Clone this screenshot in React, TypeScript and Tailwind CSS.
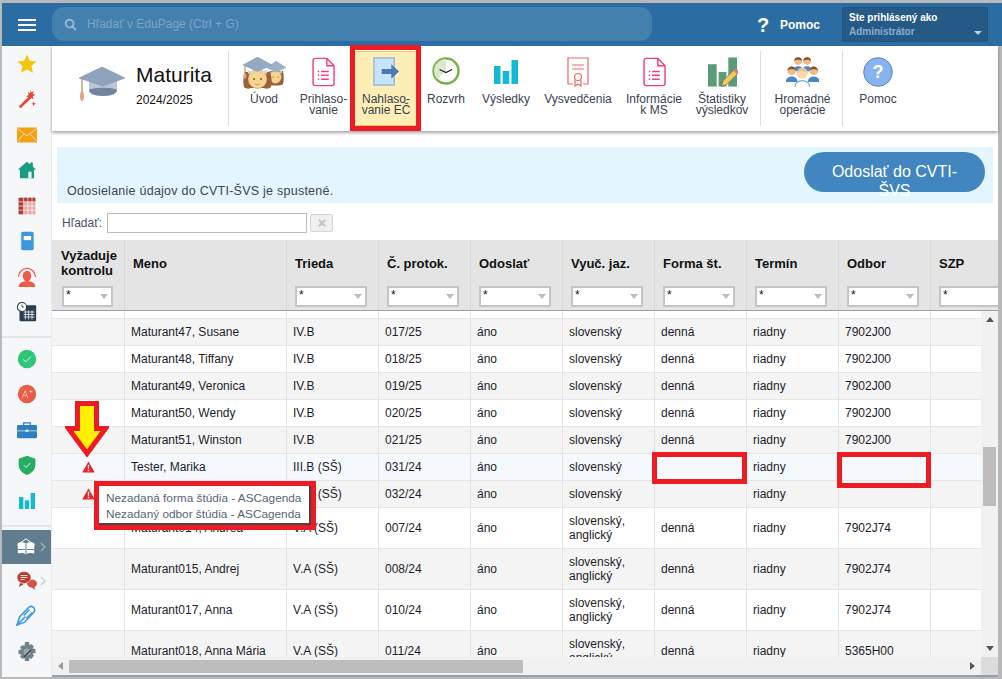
import React from "react";

const F = "font-['Liberation_Sans',Arial,sans-serif]";

/* ---------- toolbar icons ---------- */
const Cap = ({ className = "" }: { className?: string }) => (
  <svg viewBox="0 0 48 34" className={className}>
    <path d="M11 13v12c0 3 6 5 14 5s14-2 14-5V13z" fill="#b9c6d6" />
    <path d="M11 24c0 3 6 6 14 6s14-3 14-6c-3-3-25-3-28 0z" fill="#73859c" />
    <path d="M24 1 47 12 25 20 1 12z" fill="#8ea4bd" stroke="#7d93ad" strokeWidth=".6" />
    <path d="M4 12v14" stroke="#b28468" strokeWidth="1.2" />
    <path d="M2 30c0-3 1-5 2-5s2 2 2 5-1 5-2 5-2-2-2-5z" fill="#e0a283" />
  </svg>
);

const Doc = ({ c }: { c: string }) => (
  <svg viewBox="0 0 24 30" className="w-[23px] h-[30px]" fill="none" stroke={c} strokeWidth="1.5">
    <path d="M3.5.8h12l7.5 7.6v18.4a2.4 2.4 0 0 1-2.4 2.4H3.5a2.4 2.4 0 0 1-2.4-2.4V3.2A2.4 2.4 0 0 1 3.5.8z" />
    <path d="M15.5.8v7.6H23" />
    <path d="M9.5 14.5h8M9.5 18.5h8M9.5 22.5h8M6 14.5h1.5M6 18.5h1.5M6 22.5h1.5" strokeWidth="1.6" />
  </svg>
);

const Students = () => (
  <svg viewBox="0 0 44 32" className="w-[44px] h-[32px]">
    {/* small student behind */}
    <path d="M26 14c-1 5-1 10 0 13 2 2 14 2 15 0 1-3 1-8 0-13z" fill="#9c5f38" />
    <ellipse cx="33.500" cy="20" rx="6" ry="6.500" fill="#f7d58f" stroke="#a27452" strokeWidth=".4" />
    <path d="M26 13.500c4 2 10 2 14 0v3c-4-2-10-2-14 0z" fill="#c8d3df" />
    <path d="M34 4l10 6.500L34 15l-9-4z" fill="#9cb2c9" stroke="#8aa0b8" strokeWidth=".4" />
    {/* big student */}
    <path d="M3 15c-2 6-2 11-1 15 2 2 5 2 7 1h13c2 1 5 1 7-1 1-4 1-9-1-15z" fill="#9c5f38" />
    <ellipse cx="15.500" cy="22" rx="9.500" ry="9.500" fill="#f7d58f" stroke="#a27452" strokeWidth=".4" />
    <path d="M6 13c5 2.500 14 2.500 19 0v4c-5-2.500-14-2.500-19 0z" fill="#cdd7e2" />
    <path d="M15.500 0 30 8 15.500 14.500 1 8z" fill="#93aac3" stroke="#8197b2" strokeWidth=".5" />
    <path d="M3 9v7" stroke="#a67d63" />
    <path d="M1.500 19c0-2 .7-3 1.500-3s1.500 1 1.500 3-.7 3-1.500 3-1.500-1-1.500-3z" fill="#dd9f80" />
    <circle cx="12" cy="22" r=".9" fill="#6b4a2f" />
    <circle cx="19" cy="22" r=".9" fill="#6b4a2f" />
    <path d="M13 27c1.500 1 3.500 1 5 0" stroke="#b06a46" strokeWidth=".6" fill="none" />
    <circle cx="31" cy="20" r=".6" fill="#6b4a2f" />
    <circle cx="36" cy="20" r=".6" fill="#6b4a2f" />
  </svg>
);

const ExportIcon = () => (
  <svg viewBox="0 0 28 30" className="w-[27px] h-[29px] ml-[1px]">
    <rect x="1" y="1" width="21" height="28" fill="#c6e5fd" stroke="#9db5d4" strokeWidth="1.500" />
    <path d="M9 12.500h10V7.500l8 7.500-8 7.500v-5H9z" fill="#4a7bb5" />
  </svg>
);

const Clock = () => (
  <svg viewBox="0 0 28 28" className="w-[28px] h-[28px]">
    <circle cx="14" cy="14" r="12.500" fill="#fff" stroke="#7cb04b" strokeWidth="2.500" />
    <path d="M14 2a12 12 0 0 0-12 12 12 12 0 0 0 3 8l9-8z" fill="#dbe8cb" />
    <path d="M7.500 12.500 14 15.500l6-3" fill="none" stroke="#222" strokeWidth="1.300" />
  </svg>
);

const Bars = ({ c, className }: { c: string; className: string }) => (
  <svg viewBox="0 0 24 24" className={className} fill={c}>
    <rect x="0" y="6" width="6.500" height="18" />
    <rect x="8.700" y="11" width="6.500" height="13" />
    <rect x="17.500" y="0" width="6.500" height="24" />
  </svg>
);

const Diploma = () => (
  <svg viewBox="0 0 22 30" className="w-[22px] h-[30px]" fill="none" stroke="#ee6a5f" strokeWidth="1.200">
    <path d="M6 27H1V1h20v26h-5" />
    <path d="M5 8h12M5 12h12" />
    <circle cx="11" cy="20" r="3.500" />
    <path d="M8 23v6l3-2 3 2v-6" />
  </svg>
);

const StatsPencil = () => (
  <svg viewBox="0 0 32 30" className="w-[31px] h-[30px]">
    <rect x="1" y="7" width="9" height="23" fill="#5b9c78" />
    <rect x="12" y="15" width="8" height="15" fill="#5b9c78" />
    <rect x="22" y="0" width="9" height="30" fill="#5b9c78" />
    <path d="M15 30l1.500-6 11-11 4 4-11 11z" fill="#f3ca59" stroke="#554" strokeWidth=".6" />
    <path d="M27.500 13l2-2 3.500 3.500-2 2.500z" fill="#e0788a" />
  </svg>
);

const Person = ({ x, y, s = 1, big = false }: { x: number; y: number; s?: number; big?: boolean }) => (
  <g transform={`translate(${x} ${y}) scale(${s})`}>
    <path d="M0 17c0-3 3-5 6-5s6 2 6 5v1H0z" fill={big ? "#fff" : "#4a86c5"} stroke={big ? "#7fb0dc" : "none"} />
    <circle cx="6" cy="6" r="4.500" fill={big ? "#f8dcae" : "#f0b988"} />
    <path d="M1.500 6a4.500 4.500 0 0 1 9 0c-2-2-7-2-9 0z" fill={big ? "#eec68d" : "#8a5226"} />
  </g>
);

const People = () => (
  <svg viewBox="0 0 33 30" className="w-[33px] h-[30px]">
    <Person x={7} y={-1} s={0.85} />
    <Person x={16} y={-1} s={0.85} />
    <Person x={0} y={8} s={0.95} />
    <Person x={22} y={8} s={0.95} />
    <Person x={9} y={9} s={1.220} big />
  </svg>
);

const Help = () => (
  <svg viewBox="0 0 30 30" className="w-[30px] h-[30px]">
    <circle cx="15" cy="15" r="14.300" fill="#88b3ef" stroke="#5d83bd" strokeWidth="1" />
    <text x="15" y="21" textAnchor="middle" fill="#fff" fontSize="18" fontWeight="700" fontFamily="Liberation Sans">?</text>
  </svg>
);

/* ---------- sidebar icons ---------- */
const S = ({ children, box = "0 0 24 24" }: { children: React.ReactNode; box?: string }) => (
  <svg viewBox={box} className="w-[20px] h-[20px]">{children}</svg>
);

const sideTop: React.ReactNode[] = [
  <S><path d="M12 .5l3.400 7.500 8 .9-6 5.500 1.700 8L12 18.500l-7.100 3.900 1.700-8-6-5.500 8-.9z" fill="#f5c60e" /></S>,
  <S><path d="M2 21l12-12 2.500 2.500L4.500 23z" fill="#e5483b" /><path d="M16 1l1 3 3-1-1 3 3 1-3 2 1 3-3-1-2 2-1-3-3-1 3-2-1-3 3 1z" fill="#e5483b" /><path d="M20 15l.8 2 2 .8-2 .8-.8 2-.8-2-2-.8 2-.8z" fill="#e5483b" /></S>,
  <S box="0 0 24 18"><rect x="0" y="0" width="24" height="18" fill="#f59f16" /><path d="M0 1l12 9 12-9M0 17l8.500-9.500M24 17l-8.500-9.500" fill="none" stroke="#fde9c0" strokeWidth="1" /></S>,
  <S><path d="M12 2 1 11.500h2.500V22h17V11.500H23L19 8V3h-3v2.300z" fill="#1a9c80" /><rect x="13.500" y="14" width="4" height="8" fill="#e9f5f2" /></S>,
  <S><rect x="2" y="2" width="20" height="20" fill="#e7a8a3" /><path d="M2 2h20v5H2zM2 2h6v20H2z" fill="#b23a32" /><path d="M2 7h20M2 12h20M2 17h20M8 2v20M13 2v20M18 2v20" stroke="#fff" strokeWidth=".8" /></S>,
  <S box="0 0 18 24"><rect x="2" y="1" width="15" height="22" rx="2" fill="#3a97dc" /><rect x="5" y="6" width="9" height="5" fill="#fff" /><path d="M1 4h2M1 8h2M1 12h2M1 16h2M1 20h2" stroke="#a9d2ef" /></S>,
  <S><path d="M12 1a11 11 0 0 1 11 11h-1.500a9.500 9.500 0 0 0-19 0H1A11 11 0 0 1 12 1z" fill="#ea5b4a" /><ellipse cx="12" cy="11" rx="5" ry="6.500" fill="#ea5b4a" /><path d="M2 24c0-5 4-7 10-7s10 2 10 7z" fill="#ea5b4a" /></S>,
  <S><rect x="3" y="4" width="20" height="19" rx="1" fill="#2b3d4f" /><circle cx="6" cy="6" r="5.500" fill="#fff" stroke="#2b3d4f" strokeWidth="1.300" /><path d="M6 3v3h2.500" stroke="#2b3d4f" fill="none" /><path d="M8 12h13M8 15h13M8 18h13M10 10v11M14 10v11M18 10v11" stroke="#fff" strokeWidth=".9" /></S>,
];

const sideMid: React.ReactNode[] = [
  <S><circle cx="12" cy="12" r="11" fill="#2fc678" /><path d="M7.500 12.500l3 3 6-6.500" fill="none" stroke="#fff" strokeWidth="1" /></S>,
  <S><circle cx="12" cy="12" r="11" fill="#ea5b4a" /><path d="M6 17l4-9 3 9M7.500 14h4.500M14.500 9h4M16.500 7v4" fill="none" stroke="#f8c4bd" strokeWidth="1" /></S>,
  <S box="0 0 24 20"><path d="M8 4V1.500h8V4" fill="none" stroke="#2b80bd" strokeWidth="1.500" /><rect x="0" y="4" width="24" height="16" rx="1.500" fill="#2b80bd" /><path d="M0 11h24" stroke="#cfe5f4" /><rect x="10" y="9.500" width="4" height="3" rx="1.500" fill="#cfe5f4" /></S>,
  <S><path d="M12 1l10 3.500V12c0 6-5 10-10 12C7 22 2 18 2 12V4.500z" fill="#25ad63" /><path d="M8 12l3 3 5-5.500" fill="none" stroke="#fff" strokeWidth="1" /></S>,
  <Bars c="#14bad5" className="w-[16px] h-[16px]" />,
];

const Book = () => (
  <svg viewBox="0 0 24 22" className="w-[20px] h-[18px]" fill="none" stroke="#fff" strokeWidth="1.200">
    <path d="M1 9 12 1l11 8" />
    <path d="M12 7C9 5 5 5 2 6v13c3-1 7-1 10 1 3-2 7-2 10-1V6c-3-1-7-1-10 1z" fill="#fff" stroke="none" />
    <path d="M12 7v13" stroke="#617d8d" />
    <path d="M2 14h9M13 14h9" stroke="#617d8d" />
  </svg>
);

const Chat = () => (
  <svg viewBox="0 0 20 19" className="w-[20px] h-[19px]">
    <ellipse cx="15" cy="12.500" rx="5" ry="4" fill="#d4534a" />
    <path d="M13 15l5 4-1-5z" fill="#d4534a" />
    <ellipse cx="7" cy="6.500" rx="7" ry="6" fill="#c0392b" stroke="#f5f7f9" strokeWidth=".6" />
    <path d="M3 12l-1 4 5-3z" fill="#c0392b" />
    <path d="M3.500 4.500h7M3.500 6.500h7M3.500 8.500h4" stroke="#fff" strokeWidth=".9" />
  </svg>
);

const Pen = () => (
  <svg viewBox="0 0 22 22" className="w-[21px] h-[21px]" fill="none" stroke="#3d9be0" strokeWidth="1.700">
    <path d="M1 21l3-9L14 2c3-2 7 2 5 5L9 18z" />
    <path d="M1 21l9-9M8 11l6-6M11 14l6-6" />
  </svg>
);

const Gear = () => (
  <svg viewBox="0 0 20 20" className="w-[20px] h-[20px]">
    <path d="M8 0h4l.5 3 2-.8L17 4.500l-1.500 2 3 .5v4l-3 .5 1.500 2L14.500 17l-2-1-.5 3H8l-.5-3-2 1L3 14.500l1.500-2-3-.5V8l3-.5L3 5.500 5.500 3l2 .9z" fill="#72838c" />
    <circle cx="10" cy="10" r="3.500" fill="#9aa7ae" />
    <path d="M7 15l7-7" stroke="#3a4650" strokeWidth="1.500" />
  </svg>
);

const SideCell = ({ children, h = "h-[35.500px]" }: { children: React.ReactNode; h?: string }) => (
  <div className={`${h} flex items-center justify-center shrink-0`}>{children}</div>
);

/* ---------- toolbar ---------- */
type Tool = { w: string; icon: React.ReactNode; label: React.ReactNode };
const tools1: Tool[] = [
  { w: "w-[65px] pl-[5px]", icon: <Students />, label: "Úvod" },
  { w: "w-[61px] pr-[2px]", icon: <Doc c="#ef3f85" />, label: <>Prihlaso-<br />vanie</> },
];
const tools2: Tool[] = [
  { w: "w-[58px]", icon: <Clock />, label: "Rozvrh" },
  { w: "w-[62px]", icon: <Bars c="#14bad5" className="w-[24px] h-[24px] mt-[3px]" />, label: "Výsledky" },
  { w: "w-[82px]", icon: <Diploma />, label: "Vysvedčenia" },
  { w: "w-[70px]", icon: <Doc c="#ef3f85" />, label: <>Informácie<br />k MS</> },
  { w: "w-[66px]", icon: <StatsPencil />, label: <>Štatistiky<br />výsledkov</> },
];

const ToolItem = ({ t }: { t: Tool }) => (
  <div className={`${t.w} shrink-0 flex flex-col items-center`}>
    <div className="h-[31px] mt-[11px] flex items-start justify-center">{t.icon}</div>
    <div className="mt-[6px] text-[12px] leading-[11px] text-center text-[#3a3f52] whitespace-nowrap">{t.label}</div>
  </div>
);

const VSep = () => <div className="w-px h-[75px] bg-[#dcdcdc] shrink-0 mt-[5px]" />;

/* ---------- table ---------- */
const cols = [
  "w-[72px]", "w-[162px]", "w-[92px]", "w-[92px]", "w-[92px]", "w-[92px]", "w-[92px]", "w-[92px]", "w-[92px]", "w-[70px]",
];
const heads: { t: React.ReactNode; w?: string; filter: boolean }[] = [
  { t: <>Vyžaduje<br />kontrolu</>, w: "w-[51px] ml-[1px]", filter: true },
  { t: "Meno", filter: false },
  { t: "Trieda", filter: true },
  { t: "Č. protok.", filter: true },
  { t: "Odoslať", filter: true },
  { t: "Vyuč. jaz.", filter: true },
  { t: "Forma št.", filter: true },
  { t: "Termín", filter: true },
  { t: "Odbor", filter: true },
  { t: "SZP", filter: true },
];

const Warn = () => (
  <svg viewBox="0 0 14 13" className="w-[13px] h-[12px]">
    <path d="M7 0.500 13.800 12.500H.2z" fill="#e8262a" />
    <path d="M6.200 4h1.600l-.2 4.800H6.400zM6.200 9.500h1.600v1.600H6.200z" fill="#fff" />
  </svg>
);

type Row = { warn?: boolean; name: string; cls: string; no: string; lang?: boolean; forma?: string; odbor: string; h: string; bg: string; };
const row = (name: string, cls: string, no: string, odbor: string, bg: string, extra: Partial<Row> = {}): Row => ({
  name, cls, no, odbor, bg, forma: "denná", h: "h-[27px]", ...extra,
});
const G = "bg-[#f4f4f4]";
const W = "bg-white";
const rows: Row[] = [
  row("Maturant47, Susane", "IV.B", "017/25", "7902J00", G),
  row("Maturant48, Tiffany", "IV.B", "018/25", "7902J00", W),
  row("Maturant49, Veronica", "IV.B", "019/25", "7902J00", G),
  row("Maturant50, Wendy", "IV.B", "020/25", "7902J00", W),
  row("Maturant51, Winston", "IV.B", "021/25", "7902J00", G),
  row("Tester, Marika", "III.B (SŠ)", "031/24", "", "bg-[#f5f9fe]", { warn: true, forma: "" }),
  row("Maturant0, Adam", "III.B (SŠ)", "032/24", "", G, { warn: true, forma: "" }),
  row("Maturant014, Andrea", "V.A (SŠ)", "007/24", "7902J74", W, { lang: true, h: "h-[41px]" }),
  row("Maturant015, Andrej", "V.A (SŠ)", "008/24", "7902J74", G, { lang: true, h: "h-[41px]" }),
  row("Maturant017, Anna", "V.A (SŠ)", "010/24", "7902J74", W, { lang: true, h: "h-[41px]" }),
  row("Maturant018, Anna Mária", "V.A (SŠ)", "011/24", "5365H00", G, { lang: true, h: "h-[41px]" }),
];

const Cell = ({ i, children }: { i: number; children?: React.ReactNode }) => (
  <div className={`${cols[i]} shrink-0 h-full flex items-center ${i === 0 ? "justify-center" : "border-l border-[#e2e2e2] pl-[6px]"} text-[12px] leading-[14px] text-[#1d1d2b]`}>
    {children}
  </div>
);

const Filter = ({ w = "w-[72px]" }: { w?: string }) => (
  <div className={`${w} h-[21px] bg-white border-2 border-[#c4c4c4] relative shrink-0`}>
    <span className="absolute left-[2px] top-[0px] text-[12px] leading-[15px] text-[#111]">*</span>
    <span className="absolute right-[3px] top-[6px] w-0 h-0 border-l-[4px] border-r-[4px] border-t-[5px] border-l-transparent border-r-transparent border-t-[#bcbcbc]" />
  </div>
);

const Frame = ({ className }: { className: string }) => (
  <div className={`absolute z-30 border-[5px] border-[#ed1c24] pointer-events-none ${className}`} />
);

export default function App() {
  return (
    <div className={`${F} relative w-[1002px] h-[679px] overflow-hidden bg-[#b9b9b9] pt-[3px] pl-[2px] pr-[4px] pb-[2px] flex flex-col`}>
      {/* top bar */}
      <header className="h-[43px] shrink-0 -mr-[4px] bg-[#2b6ca2] flex items-center relative z-20">
        <div className="w-[50px] shrink-0 flex flex-col items-center gap-[3px]">
          <span className="w-[18px] h-[2px] bg-white" />
          <span className="w-[18px] h-[2px] bg-white" />
          <span className="w-[18px] h-[2px] bg-white" />
        </div>
        <div className="w-[600px] h-[34px] rounded-[12px] bg-[#4480ae] flex items-center pl-[12px] gap-[10px] -mt-[1px]">
          <svg viewBox="0 0 14 14" className="w-[13px] h-[13px]" fill="none" stroke="#8fb6d2" strokeWidth="2.200">
            <circle cx="6" cy="6" r="4.200" />
            <path d="M9.200 9.200 13 13" />
          </svg>
          <span className="text-[12px] text-[#7ba6c6] font-normal">Hľadať v EduPage (Ctrl + G)</span>
        </div>
        <span className="ml-[105px] w-[12px] text-[20px] font-bold text-white leading-none">?</span>
        <span className="ml-[11px] text-[12px] font-bold text-white">Pomoc</span>
        <div className="ml-[22px] w-[146px] h-[35px] rounded-[2px] bg-[#255a86] border border-[#21527b] px-[6px] pt-[3px] relative -mt-[1px]">
          <div className="text-[10px] leading-[13px] font-bold text-white">Ste prihlásený ako</div>
          <div className="text-[10px] leading-[15px] font-bold text-[#89aecd]">Administrátor</div>
          <span className="absolute right-[5px] bottom-[6px] w-0 h-0 border-l-[4px] border-r-[4px] border-t-[4px] border-l-transparent border-r-transparent border-t-[#b9cfe2]" />
        </div>
      </header>

      <div className="flex flex-1 min-h-0">
        {/* sidebar */}
        <aside className="w-[50px] shrink-0 bg-[#f5f7f9] flex flex-col border-r border-[#e9ecef]">
          {sideTop.map((n, i) => <SideCell key={i}>{n}</SideCell>)}
          <div className="h-[6px] shrink-0" />
          <div className="h-[2px] shrink-0 bg-[#e3e5e8]" />
          <div className="h-[3px] shrink-0" />
          {sideMid.map((n, i) => <SideCell key={i}>{n}</SideCell>)}
          <div className="h-[6px] shrink-0" />
          <div className="h-[2px] shrink-0 bg-[#e3e5e8]" />
          <div className="h-[3.500px] shrink-0" />
          <div className="h-[34px] shrink-0 bg-[#617d8d] flex items-center pl-[14px] gap-[4px]">
            <Book />
            <svg viewBox="0 0 6 10" className="w-[6px] h-[10px]" fill="none" stroke="#9fb2bd" strokeWidth="1.200"><path d="M1 1l4 4-4 4" /></svg>
          </div>
          <div className="h-[33px] shrink-0 flex items-center pl-[15px] gap-[3px]">
            <Chat />
            <svg viewBox="0 0 6 10" className="w-[6px] h-[10px]" fill="none" stroke="#c9ced2" strokeWidth="1.200"><path d="M1 1l4 4-4 4" /></svg>
          </div>
          <SideCell h="h-[36px]"><Pen /></SideCell>
          <SideCell h="h-[37px]"><Gear /></SideCell>
        </aside>

        {/* main */}
        <main className="flex-1 min-w-0 bg-white flex flex-col border-b-2 border-[#8aa2b8]">
          {/* toolbar */}
          <div className="h-[85px] shrink-0 flex shadow-[0_2px_3px_rgba(0,0,0,0.35)] relative z-10 bg-white">
            <div className="w-[176px] shrink-0 flex items-start pl-[26px] pt-[17px]">
              <Cap className="w-[48px] h-[36px] mt-[2px]" />
              <div className="ml-[10px]">
                <div className="text-[21px] leading-[24px] text-[#111]">Maturita</div>
                <div className="text-[12px] leading-[14px] mt-[6px] text-[#111]">2024/2025</div>
              </div>
            </div>
            <VSep />
            {tools1.map((t, i) => <ToolItem key={i} t={t} />)}
            <div className="w-[62px] h-[75px] mt-[5px] shrink-0 flex flex-col items-center bg-[#fdeeb5] border-y border-[#f3c65a]">
              <div className="h-[31px] mt-[5px] flex items-start"><ExportIcon /></div>
              <div className="mt-[6px] text-[12px] leading-[11px] text-center text-[#3a3f52] whitespace-nowrap">Nahlaso-<br />vanie EČ</div>
            </div>
            {tools2.map((t, i) => <ToolItem key={i} t={t} />)}
            <div className="w-[5px] shrink-0" />
            <VSep />
            <ToolItem t={{ w: "w-[81px] pl-[2px]", icon: <People />, label: <>Hromadné<br />operácie</> }} />
            <VSep />
            <ToolItem t={{ w: "w-[70px]", icon: <Help />, label: "Pomoc" }} />
          </div>

          {/* info box */}
          <div className="h-[56px] shrink-0 mt-[16px] ml-[5px] mr-[5px] bg-[#e3f5fe] relative flex justify-between items-end pl-[10px]">
            <span className="text-[12.500px] leading-[16px] pb-[4px] tracking-[0.25px] text-[#3d4458]">Odosielanie údajov do CVTI-ŠVS je spustené.</span>
            <div className="w-[181px] h-[40px] mr-[8px] mb-[11px] rounded-[20px] bg-[#4186c0] text-white text-[16px] leading-[19px] text-center px-[24px] pt-[10px] shrink-0">
              Odoslať do CVTI-ŠVS
            </div>
          </div>

          {/* search */}
          <div className="h-[37px] shrink-0 flex items-start pl-[10px] pt-[10px]">
            <span className="text-[12px] leading-[20px] text-[#4a5266] w-[45px]">Hľadať:</span>
            <div className="w-[200px] h-[20px] bg-white border border-[#bdbdbd]" />
            <div className="ml-[3px] w-[23px] h-[18px] mt-[1px] bg-[#f0f0f0] border border-[#d6d6d6] rounded-[2px] flex items-center justify-center text-[#c4c4c4]">
              <svg viewBox="0 0 10 10" className="w-[8px] h-[8px]" stroke="#c4c4c4" strokeWidth="2.600"><path d="M1 1l8 8M9 1l-8 8" /></svg>
            </div>
          </div>

          {/* table head */}
          <div className="h-[70px] shrink-0 flex bg-[#e4e4e4] overflow-hidden">
            {heads.map((h, i) => (
              <div key={i} className={`${cols[i]} shrink-0 h-full flex flex-col ${i > 0 ? "border-l border-[#d8d8d8] pl-[8px]" : "pl-[9px]"}`}>
                <div className="h-[46px] flex items-center text-[13px] leading-[15px] font-bold text-[#111] whitespace-nowrap">{h.t}</div>
                {h.filter && <Filter w={h.w} />}
              </div>
            ))}
          </div>
          <div className="h-[1px] shrink-0 bg-[#93a3b4]" />

          {/* table body + scrollbars */}
          <div className="flex-1 min-h-0 flex">
            <div className="flex-1 min-w-0 flex flex-col">
              <div className="flex-1 min-h-0 overflow-hidden">
                <div className="h-[7px] flex">
                  {cols.map((c, i) => <div key={i} className={`${c} shrink-0 ${i > 0 ? "border-l border-[#e2e2e2]" : ""}`} />)}
                </div>
                {rows.map((r, idx) => (
                  <div key={idx} className={`${r.h} flex ${r.bg} border-t-[1px] border-[#e6e6e6]`}>
                    <Cell i={0}>{r.warn && <Warn />}</Cell>
                    <Cell i={1}>{r.name}</Cell>
                    <Cell i={2}>{r.cls}</Cell>
                    <Cell i={3}>{r.no}</Cell>
                    <Cell i={4}>áno</Cell>
                    <Cell i={5}>{r.lang ? <span>slovenský,<br />anglický</span> : "slovenský"}</Cell>
                    <Cell i={6}>{r.forma}</Cell>
                    <Cell i={7}>riadny</Cell>
                    <Cell i={8}>{r.odbor}</Cell>
                    <Cell i={9} />
                  </div>
                ))}
              </div>
              {/* horizontal scrollbar */}
              <div className="h-[18px] shrink-0 bg-[#f1f1f1] flex items-center">
                <span className="ml-[6px] w-0 h-0 border-t-[4px] border-b-[4px] border-r-[5px] border-t-transparent border-b-transparent border-r-[#9a9a9a]" />
                <div className="ml-[6px] w-[454px] h-[13px] bg-[#bdbdbd]" />
                <span className="ml-auto mr-[6px] w-0 h-0 border-t-[4px] border-b-[4px] border-l-[5px] border-t-transparent border-b-transparent border-l-[#555]" />
              </div>
            </div>
            {/* vertical scrollbar */}
            <div className="w-[17px] shrink-0 bg-[#f1f1f1] flex flex-col items-center relative">
              <span className="mt-[6px] w-0 h-0 border-l-[4px] border-r-[4px] border-b-[5px] border-l-transparent border-r-transparent border-b-[#555]" />
              <div className="mt-[125px] w-[13px] h-[59px] bg-[#bdbdbd]" />
              <span className="mt-[140px] w-0 h-0 border-l-[4px] border-r-[4px] border-t-[5px] border-l-transparent border-r-transparent border-t-[#555]" />
              <div className="absolute bottom-0 left-0 right-0 h-[18px] bg-[#dcdcdc]" />
            </div>
          </div>
        </main>
      </div>

      {/* overlays: annotation frames, arrow and tooltip */}
      <Frame className="left-[350px] top-[45px] w-[71px] h-[86px]" />
      <Frame className="left-[652px] top-[452px] w-[95px] h-[32px]" />
      <Frame className="left-[837px] top-[452px] w-[94px] h-[36px]" />
      <svg viewBox="0 0 44 56" className="absolute z-30 left-[65px] top-[401px] w-[44px] h-[56px]">
        <path d="M12.500 2.500h19v25h9L22 52.500 3.500 27.500h9z" fill="#fff200" stroke="#ed1c24" strokeWidth="5" />
      </svg>
      <div className="absolute z-30 left-[94px] top-[481px] w-[222px] h-[49px] border-[5px] border-[#ed1c24] bg-white">
        <div className="w-full h-full border-r-[2px] border-b-[2px] border-[#444] pl-[7px] pt-[4px] text-[11.800px] leading-[16px] text-[#5a6472] whitespace-nowrap">
          Nezadaná forma štúdia - ASCagenda<br />Nezadaný odbor štúdia - ASCagenda
        </div>
      </div>
    </div>
  );
}
